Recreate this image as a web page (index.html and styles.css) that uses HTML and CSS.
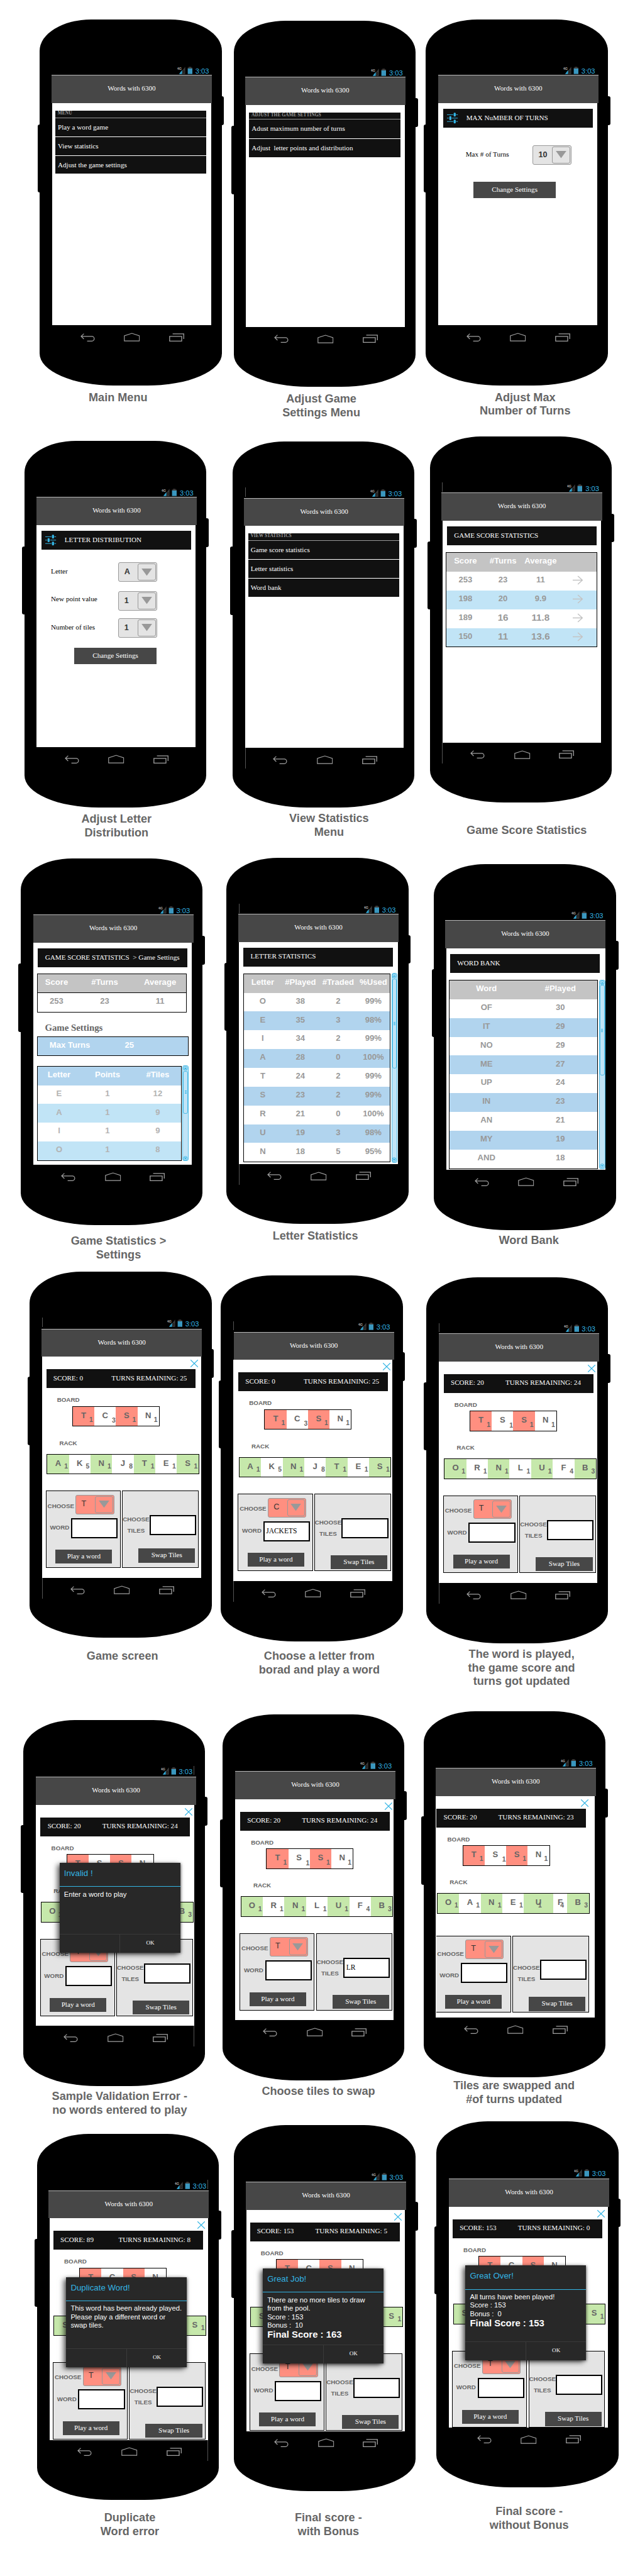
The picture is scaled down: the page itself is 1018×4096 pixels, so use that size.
FILE: index.html
```html
<!DOCTYPE html>
<html lang="en">
<head>
<meta charset="utf-8">
<title>Words with 6300 - screens</title>
<link rel="stylesheet" href="styles.css">
</head>
<body>
<svg class="sprite" width="0" height="0" aria-hidden="true">
  <symbol id="signal" viewBox="0 0 24 12">
    <text x="-0.3" y="5" class="net">4G</text>
    <path d="M2.8 11.7L7.6 5.6V11.7Z" fill="#33a9d6"/>
    <path d="M8.2 6L12.6 .2V11.7H8.2Z" fill="#3a3a3a"/>
    <path d="M9 7.4l1.4-1.8 1.4 1.8zM9 8.6l1.4 1.8 1.4-1.8z" fill="#111"/>
    <path d="M18.2 .3h4v1.2h1.8v2h-7.4v-2h1.6z" fill="#3d3d3d"/>
    <path d="M16.6 3h7.4v8.7h-7.4z" fill="#3a97bf"/>
  </symbol>
  <symbol id="back" viewBox="0 0 23 13"><path d="M5.4 .6L1 4.8L5.4 9M1 4.8H18.2a3.7 3.75 0 0 1 0 7.5H10.6" fill="none" stroke="#a0a0a0" stroke-width="1.2"/></symbol>
  <symbol id="home" viewBox="0 0 26 14"><path d="M.8 13.3V4.8L13 .9L25.2 4.8V13.3Z" fill="none" stroke="#a0a0a0" stroke-width="1.2"/></symbol>
  <symbol id="recent" viewBox="0 0 24 13"><path d="M.8 4.8H20V12.3H.8ZM5.6 .8H23.3V9" fill="none" stroke="#a0a0a0" stroke-width="1.3"/></symbol>
  <symbol id="sliders" viewBox="0 0 18 18">
    <path d="M0 3.4H18M0 9H18M0 14.6H18" stroke="#33b5e5" stroke-width="1"/>
    <path d="M10.2 3.4H15M2.8 9H8M10.2 14.6H15" stroke="#111" stroke-width="2"/>
    <rect x="11" y="0" width="3.4" height="6.4" rx="1.4" fill="#33b5e5"/>
    <rect x="3.8" y="5.8" width="3.4" height="6.4" rx="1.4" fill="#33b5e5"/>
    <rect x="11" y="11.4" width="3.4" height="6.4" rx="1.4" fill="#33b5e5"/>
  </symbol>
  <symbol id="down" viewBox="0 0 17 12"><path d="M0 0H17L8.5 11.6Z" fill="#999"/></symbol>
  <symbol id="go" viewBox="0 0 17 15"><path d="M0 7.5H15.6M8.4 .8L15.8 7.5L8.4 14.2" fill="none" stroke="#c4c4c4" stroke-width="1.5"/></symbol>
  <symbol id="close" viewBox="0 0 12 12"><path d="M.2 .3L11.8 11.7M11.8 .3L.2 11.7" stroke="#33b5e5" stroke-width="1.2"/></symbol>
  <symbol id="scrollup" viewBox="0 0 8 8"><circle cx="4" cy="4" r="3.3" fill="none" stroke="#33b5e5" stroke-width=".9"/><path d="M4 2L6.4 5.4H1.6Z" fill="#33b5e5"/></symbol>
  <symbol id="scrolldown" viewBox="0 0 8 8"><circle cx="4" cy="4" r="3.3" fill="none" stroke="#33b5e5" stroke-width=".9"/><path d="M4 6L6.4 2.6H1.6Z" fill="#33b5e5"/></symbol>
</svg>

<section class="row row1">
  <figure class="phone p1"><div class="body">
    <div class="status"><svg><use href="#signal"/></svg><span>3:03</span></div>
    <header>Words with 6300</header>
    <main class="screen">
      <div class="menu"><h2>MENU</h2><p>Play a word game</p><p>View statistics</p><p>Adjust the game settings</p></div>
    </main>
    <nav><svg class="back"><use href="#back"/></svg><svg class="home"><use href="#home"/></svg><svg class="recent"><use href="#recent"/></svg></nav>
  </div><figcaption>Main Menu</figcaption></figure>

  <figure class="phone p2"><div class="body">
    <div class="status"><svg><use href="#signal"/></svg><span>3:03</span></div>
    <header>Words with 6300</header>
    <main class="screen">
      <div class="menu"><h2>ADJUST THE GAME SETTINGS</h2><p>Adust maximum number of turns</p><p>Adjust  letter points and distribution</p></div>
    </main>
    <nav><svg class="back"><use href="#back"/></svg><svg class="home"><use href="#home"/></svg><svg class="recent"><use href="#recent"/></svg></nav>
  </div><figcaption>Adjust Game<br>Settings Menu</figcaption></figure>

  <figure class="phone p3"><div class="body">
    <div class="status"><svg><use href="#signal"/></svg><span>3:03</span></div>
    <header>Words with 6300</header>
    <main class="screen">
      <div class="bar"><svg class="sliders"><use href="#sliders"/></svg>MAX NuMBER OF TURNS</div>
      <div class="form turns">
        <div class="field"><label>Max # of Turns</label><div class="combo"><b>10</b><i><svg><use href="#down"/></svg></i></div></div>
        <div class="btn">Change Settings</div>
      </div>
    </main>
    <nav><svg class="back"><use href="#back"/></svg><svg class="home"><use href="#home"/></svg><svg class="recent"><use href="#recent"/></svg></nav>
  </div><figcaption>Adjust Max<br>Number of Turns</figcaption></figure>
</section>

<section class="row row2">
  <figure class="phone p4"><div class="body">
    <div class="status"><svg><use href="#signal"/></svg><span>3:03</span></div>
    <header>Words with 6300</header>
    <main class="screen">
      <div class="bar"><svg class="sliders"><use href="#sliders"/></svg>LETTER DISTRIBUTION</div>
      <div class="form letters">
        <div class="field"><label>Letter</label><div class="combo"><b>A</b><i><svg><use href="#down"/></svg></i></div></div>
        <div class="field raised"><label>New point value</label><div class="combo"><b>1</b><i><svg><use href="#down"/></svg></i></div></div>
        <div class="field"><label>Number of tiles</label><div class="combo"><b>1</b><i><svg><use href="#down"/></svg></i></div></div>
        <div class="btn">Change Settings</div>
      </div>
    </main>
    <nav><svg class="back"><use href="#back"/></svg><svg class="home"><use href="#home"/></svg><svg class="recent"><use href="#recent"/></svg></nav>
  </div><figcaption>Adjust Letter<br>Distribution</figcaption></figure>

  <figure class="phone p5"><div class="body edge-left">
    <div class="status"><svg><use href="#signal"/></svg><span>3:03</span></div>
    <header>Words with 6300</header>
    <main class="screen">
      <div class="menu"><h2>VIEW STATISTICS</h2><p>Game score statistics</p><p>Letter statistics</p><p>Word bank</p></div>
    </main>
    <nav><svg class="back"><use href="#back"/></svg><svg class="home"><use href="#home"/></svg><svg class="recent"><use href="#recent"/></svg></nav>
  </div><figcaption>View Statistics<br>Menu</figcaption></figure>

  <figure class="phone p6"><div class="body edge-left">
    <div class="status"><svg><use href="#signal"/></svg><span>3:03</span></div>
    <header>Words with 6300</header>
    <main class="screen">
      <div class="bar">GAME SCORE STATISTICS</div>
      <table class="scores">
        <tr><th>Score</th><th>#Turns</th><th>Average</th><th></th></tr>
        <tr><td>253</td><td>23</td><td>11</td><td><svg><use href="#go"/></svg></td></tr>
        <tr class="sky"><td>198</td><td>20</td><td>9.9</td><td><svg><use href="#go"/></svg></td></tr>
        <tr><td>189</td><td class="big">16</td><td class="big">11.8</td><td><svg><use href="#go"/></svg></td></tr>
        <tr class="sky"><td>150</td><td class="big">11</td><td class="big">13.6</td><td><svg><use href="#go"/></svg></td></tr>
      </table>
    </main>
    <nav><svg class="back"><use href="#back"/></svg><svg class="home"><use href="#home"/></svg><svg class="recent"><use href="#recent"/></svg></nav>
  </div><figcaption>Game Score Statistics</figcaption></figure>
</section>

<section class="row row3">
  <figure class="phone p7"><div class="body">
    <div class="status"><svg><use href="#signal"/></svg><span>3:03</span></div>
    <header>Words with 6300</header>
    <main class="screen">
      <div class="bar">GAME SCORE STATISTICS  &gt; Game Settings</div>
      <table class="summary">
        <colgroup><col class="w60"><col class="w93"><col></colgroup>
        <tr><th>Score</th><th>#Turns</th><th>Average</th></tr>
        <tr><td>253</td><td>23</td><td>11</td></tr>
      </table>
      <h3>Game Settings</h3>
      <div class="maxturns"><span>Max Turns</span><span>25</span></div>
      <div class="scrolled">
        <table class="tiles">
          <colgroup><col class="w68"><col class="w86"><col></colgroup>
          <tr><th>Letter</th><th>Points</th><th>#Tiles</th></tr>
          <tr><td>E</td><td>1</td><td>12</td></tr>
          <tr class="sky"><td>A</td><td>1</td><td>9</td></tr>
          <tr><td>I</td><td>1</td><td>9</td></tr>
          <tr class="sky"><td>O</td><td>1</td><td>8</td></tr>
        </table>
        <div class="scroll"><svg><use href="#scrollup"/></svg><div class="thumb short"><span></span></div><svg><use href="#scrolldown"/></svg></div>
      </div>
    </main>
    <nav><svg class="back"><use href="#back"/></svg><svg class="home"><use href="#home"/></svg><svg class="recent"><use href="#recent"/></svg></nav>
  </div><figcaption>Game Statistics &gt;<br>Settings</figcaption></figure>

  <figure class="phone p8"><div class="body edge-left">
    <div class="status"><svg><use href="#signal"/></svg><span>3:03</span></div>
    <header>Words with 6300</header>
    <main class="screen">
      <div class="bar">LETTER STATISTICS</div>
      <div class="scrolled">
        <table class="usage">
          <colgroup><col class="w60"><col class="w60"><col class="w60"><col></colgroup>
          <tr><th>Letter</th><th>#Played</th><th>#Traded</th><th>%Used</th></tr>
          <tr><td>O</td><td>38</td><td>2</td><td>99%</td></tr>
          <tr class="blue"><td>E</td><td>35</td><td>3</td><td>98%</td></tr>
          <tr><td>I</td><td>34</td><td>2</td><td>99%</td></tr>
          <tr class="blue"><td>A</td><td>28</td><td>0</td><td>100%</td></tr>
          <tr><td>T</td><td>24</td><td>2</td><td>99%</td></tr>
          <tr class="blue"><td>S</td><td>23</td><td>2</td><td>99%</td></tr>
          <tr><td>R</td><td>21</td><td>0</td><td>100%</td></tr>
          <tr class="blue"><td>U</td><td>19</td><td>3</td><td>98%</td></tr>
          <tr><td>N</td><td>18</td><td>5</td><td>95%</td></tr>
        </table>
        <div class="scroll"><svg><use href="#scrollup"/></svg><div class="thumb"><span></span></div><svg><use href="#scrolldown"/></svg></div>
      </div>
    </main>
    <nav><svg class="back"><use href="#back"/></svg><svg class="home"><use href="#home"/></svg><svg class="recent"><use href="#recent"/></svg></nav>
  </div><figcaption>Letter Statistics</figcaption></figure>

  <figure class="phone p9"><div class="body">
    <div class="status"><svg><use href="#signal"/></svg><span>3:03</span></div>
    <header>Words with 6300</header>
    <main class="screen">
      <div class="bar">WORD BANK</div>
      <div class="scrolled">
        <table class="bank">
          <tr><th>Word</th><th>#Played</th></tr>
          <tr><td>OF</td><td>30</td></tr>
          <tr class="blue"><td>IT</td><td>29</td></tr>
          <tr><td>NO</td><td>29</td></tr>
          <tr class="blue"><td>ME</td><td>27</td></tr>
          <tr><td>UP</td><td>24</td></tr>
          <tr class="blue"><td>IN</td><td>23</td></tr>
          <tr><td>AN</td><td>21</td></tr>
          <tr class="blue"><td>MY</td><td>19</td></tr>
          <tr><td>AND</td><td>18</td></tr>
        </table>
        <div class="scroll"><svg><use href="#scrollup"/></svg><div class="thumb"><span></span></div><svg><use href="#scrolldown"/></svg></div>
      </div>
    </main>
    <nav><svg class="back"><use href="#back"/></svg><svg class="home"><use href="#home"/></svg><svg class="recent"><use href="#recent"/></svg></nav>
  </div><figcaption>Word Bank</figcaption></figure>
</section>

<section class="row row4">
  <figure class="phone p10"><div class="body edge-left">
    <div class="status"><svg><use href="#signal"/></svg><span>3:03</span></div>
    <header>Words with 6300</header>
    <main class="screen"><div class="game">
      <svg class="close"><use href="#close"/></svg>
      <div class="bar"><span>SCORE: 0</span><span class="left">TURNS REMAINING: 25</span></div>
      <h4>BOARD</h4>
      <div class="board"><div>T<sub>1</sub></div><div>C<sub>3</sub></div><div>S<sub>1</sub></div><div>N<sub>1</sub></div></div>
      <h4 class="rk">RACK</h4>
      <div class="rack"><div>A<sub>1</sub></div><div>K<sub>5</sub></div><div>N<sub>1</sub></div><div>J<sub>8</sub></div><div>T<sub>1</sub></div><div>E<sub>1</sub></div><div>S<sub>1</sub></div></div>
      <div class="panels">
        <div class="play"><div class="line"><label>CHOOSE</label><div class="combo red"><span>T</span><i><svg><use href="#down"/></svg></i></div></div>
          <div class="line"><label>WORD</label><div class="input"></div></div><div class="btn">Play a word</div></div>
        <div class="swap"><div class="line"><label>CHOOSE<br>TILES</label><div class="input"></div></div><div class="btn">Swap Tiles</div></div>
      </div>
    </div></main>
    <nav><svg class="back"><use href="#back"/></svg><svg class="home"><use href="#home"/></svg><svg class="recent"><use href="#recent"/></svg></nav>
  </div><figcaption>Game screen</figcaption></figure>

  <figure class="phone p11"><div class="body edge-left">
    <div class="status"><svg><use href="#signal"/></svg><span>3:03</span></div>
    <header>Words with 6300</header>
    <main class="screen"><div class="game">
      <svg class="close"><use href="#close"/></svg>
      <div class="bar"><span>SCORE: 0</span><span class="left">TURNS REMAINING: 25</span></div>
      <h4>BOARD</h4>
      <div class="board"><div>T<sub>1</sub></div><div>C<sub>3</sub></div><div>S<sub>1</sub></div><div>N<sub>1</sub></div></div>
      <h4 class="rk">RACK</h4>
      <div class="rack"><div>A<sub>1</sub></div><div>K<sub>5</sub></div><div>N<sub>1</sub></div><div>J<sub>8</sub></div><div>T<sub>1</sub></div><div>E<sub>1</sub></div><div>S<sub>1</sub></div></div>
      <div class="panels">
        <div class="play"><div class="line"><label>CHOOSE</label><div class="combo red"><span>C</span><i><svg><use href="#down"/></svg></i></div></div>
          <div class="line"><label>WORD</label><div class="input">JACKETS</div></div><div class="btn">Play a word</div></div>
        <div class="swap"><div class="line"><label>CHOOSE<br>TILES</label><div class="input"></div></div><div class="btn">Swap Tiles</div></div>
      </div>
    </div></main>
    <nav><svg class="back"><use href="#back"/></svg><svg class="home"><use href="#home"/></svg><svg class="recent"><use href="#recent"/></svg></nav>
  </div><figcaption>Choose a letter from<br>borad and play a word</figcaption></figure>

  <figure class="phone p12"><div class="body edge-left">
    <div class="status"><svg><use href="#signal"/></svg><span>3:03</span></div>
    <header>Words with 6300</header>
    <main class="screen"><div class="game">
      <svg class="close"><use href="#close"/></svg>
      <div class="bar"><span>SCORE: 20</span><span class="left">TURNS REMAINING: 24</span></div>
      <h4>BOARD</h4>
      <div class="board"><div>T<sub>1</sub></div><div>S<sub>1</sub></div><div>S<sub>1</sub></div><div>N<sub>1</sub></div></div>
      <h4 class="rk">RACK</h4>
      <div class="rack"><div>O<sub>1</sub></div><div>R<sub>1</sub></div><div>N<sub>1</sub></div><div>L<sub>1</sub></div><div>U<sub>1</sub></div><div>F<sub>4</sub></div><div>B<sub>3</sub></div></div>
      <div class="panels">
        <div class="play"><div class="line"><label>CHOOSE</label><div class="combo red"><span>T</span><i><svg><use href="#down"/></svg></i></div></div>
          <div class="line"><label>WORD</label><div class="input"></div></div><div class="btn">Play a word</div></div>
        <div class="swap"><div class="line"><label>CHOOSE<br>TILES</label><div class="input"></div></div><div class="btn">Swap Tiles</div></div>
      </div>
    </div></main>
    <nav><svg class="back"><use href="#back"/></svg><svg class="home"><use href="#home"/></svg><svg class="recent"><use href="#recent"/></svg></nav>
  </div><figcaption>The word is played,<br>the game score and<br>turns got updated</figcaption></figure>
</section>

<section class="row row5">
  <figure class="phone p13"><div class="body edge-right">
    <div class="status"><svg><use href="#signal"/></svg><span>3:03</span></div>
    <header>Words with 6300</header>
    <main class="screen"><div class="game">
      <svg class="close"><use href="#close"/></svg>
      <div class="bar"><span>SCORE: 20</span><span class="left">TURNS REMAINING: 24</span></div>
      <h4>BOARD</h4>
      <div class="board"><div>T</div><div>S</div><div>S</div><div>N</div></div>
      <h4 class="rk">RACK</h4>
      <div class="rack"><div>O<sub>1</sub></div><div></div><div></div><div></div><div></div><div></div><div>B<sub>3</sub></div></div>
      <div class="panels">
        <div class="play"><div class="line"><label>CHOOSE</label><div class="combo red"><span>T</span><i><svg><use href="#down"/></svg></i></div></div>
          <div class="line"><label>WORD</label><div class="input"></div></div><div class="btn">Play a word</div></div>
        <div class="swap"><div class="line"><label>CHOOSE<br>TILES</label><div class="input"></div></div><div class="btn">Swap Tiles</div></div>
      </div>
      <div class="dialog"><h5>Invalid !</h5><div class="msg">Enter a word to play</div><footer><span></span><span>OK</span></footer></div>
    </div></main>
    <nav><svg class="back"><use href="#back"/></svg><svg class="home"><use href="#home"/></svg><svg class="recent"><use href="#recent"/></svg></nav>
  </div><figcaption>Sample Validation Error -<br>no words entered to play</figcaption></figure>

  <figure class="phone p14"><div class="body">
    <div class="status"><svg><use href="#signal"/></svg><span>3:03</span></div>
    <header>Words with 6300</header>
    <main class="screen"><div class="game">
      <svg class="close"><use href="#close"/></svg>
      <div class="bar"><span>SCORE: 20</span><span class="left">TURNS REMAINING: 24</span></div>
      <h4>BOARD</h4>
      <div class="board"><div>T<sub>1</sub></div><div>S<sub>1</sub></div><div>S<sub>1</sub></div><div>N<sub>1</sub></div></div>
      <h4 class="rk">RACK</h4>
      <div class="rack"><div>O<sub>1</sub></div><div>R<sub>1</sub></div><div>N<sub>1</sub></div><div>L<sub>1</sub></div><div>U<sub>1</sub></div><div>F<sub>4</sub></div><div>B<sub>3</sub></div></div>
      <div class="panels">
        <div class="play"><div class="line"><label>CHOOSE</label><div class="combo red"><span>T</span><i><svg><use href="#down"/></svg></i></div></div>
          <div class="line"><label>WORD</label><div class="input"></div></div><div class="btn">Play a word</div></div>
        <div class="swap"><div class="line"><label>CHOOSE<br>TILES</label><div class="input">LR</div></div><div class="btn">Swap Tiles</div></div>
      </div>
    </div></main>
    <nav><svg class="back"><use href="#back"/></svg><svg class="home"><use href="#home"/></svg><svg class="recent"><use href="#recent"/></svg></nav>
  </div><figcaption>Choose tiles to swap</figcaption></figure>

  <figure class="phone p15"><div class="body">
    <div class="status"><svg><use href="#signal"/></svg><span>3:03</span></div>
    <header>Words with 6300</header>
    <main class="screen"><div class="game">
      <svg class="close"><use href="#close"/></svg>
      <div class="bar"><span>SCORE: 20</span><span class="left">TURNS REMAINING: 23</span></div>
      <h4>BOARD</h4>
      <div class="board"><div>T<sub>1</sub></div><div>S<sub>1</sub></div><div>S<sub>1</sub></div><div>N<sub>1</sub></div></div>
      <h4 class="rk">RACK</h4>
      <div class="rack"><div>O<sub>1</sub></div><div>A<sub>1</sub></div><div>N<sub>1</sub></div><div>E<sub>1</sub></div><div class="wide">U<sub>1</sub></div><div class="narrow">F<sub>4</sub></div><div>B<sub>3</sub></div></div>
      <div class="panels">
        <div class="play"><div class="line"><label>CHOOSE</label><div class="combo red"><span>T</span><i><svg><use href="#down"/></svg></i></div></div>
          <div class="line"><label>WORD</label><div class="input"></div></div><div class="btn">Play a word</div></div>
        <div class="swap"><div class="line"><label>CHOOSE<br>TILES</label><div class="input"></div></div><div class="btn">Swap Tiles</div></div>
      </div>
    </div></main>
    <nav><svg class="back"><use href="#back"/></svg><svg class="home"><use href="#home"/></svg><svg class="recent"><use href="#recent"/></svg></nav>
  </div><figcaption>Tiles are swapped and<br>#of turns updated</figcaption></figure>
</section>

<section class="row row6">
  <figure class="phone p16"><div class="body edge-right">
    <div class="status"><svg><use href="#signal"/></svg><span>3:03</span></div>
    <header>Words with 6300</header>
    <main class="screen"><div class="game">
      <svg class="close"><use href="#close"/></svg>
      <div class="bar"><span>SCORE: 89</span><span class="left">TURNS REMAINING: 8</span></div>
      <h4>BOARD</h4>
      <div class="board"><div>T</div><div>C</div><div>S</div><div>N</div></div>
      <h4 class="rk hid"></h4>
      <div class="rack"><div>S</div><div></div><div></div><div></div><div></div><div></div><div>S<sub>1</sub></div></div>
      <div class="panels">
        <div class="play"><div class="line"><label>CHOOSE</label><div class="combo red"><span>T</span><i><svg><use href="#down"/></svg></i></div></div>
          <div class="line"><label>WORD</label><div class="input"></div></div><div class="btn">Play a word</div></div>
        <div class="swap"><div class="line"><label>CHOOSE<br>TILES</label><div class="input"></div></div><div class="btn">Swap Tiles</div></div>
      </div>
      <div class="dialog"><h5>Duplicate Word!</h5><div class="msg">This word has been already played.<br>Please play a different word or<br>swap tiles.</div><footer><span></span><span>OK</span></footer></div>
    </div></main>
    <nav><svg class="back"><use href="#back"/></svg><svg class="home"><use href="#home"/></svg><svg class="recent"><use href="#recent"/></svg></nav>
  </div><figcaption>Duplicate<br>Word error</figcaption></figure>

  <figure class="phone p17"><div class="body">
    <div class="status"><svg><use href="#signal"/></svg><span>3:03</span></div>
    <header>Words with 6300</header>
    <main class="screen"><div class="game">
      <svg class="close"><use href="#close"/></svg>
      <div class="bar"><span>SCORE: 153</span><span class="left">TURNS REMAINING: 5</span></div>
      <h4>BOARD</h4>
      <div class="board"><div>T</div><div>C</div><div>S</div><div>N</div></div>
      <h4 class="rk hid"></h4>
      <div class="rack"><div>S</div><div></div><div></div><div></div><div></div><div></div><div>S<sub>1</sub></div></div>
      <div class="panels">
        <div class="play"><div class="line"><label>CHOOSE</label><div class="combo red"><span>T</span><i><svg><use href="#down"/></svg></i></div></div>
          <div class="line"><label>WORD</label><div class="input"></div></div><div class="btn">Play a word</div></div>
        <div class="swap"><div class="line"><label>CHOOSE<br>TILES</label><div class="input"></div></div><div class="btn">Swap Tiles</div></div>
      </div>
      <div class="dialog tall"><h5>Great Job!</h5><div class="msg">There are no more tiles to draw<br>from the pool.<br>Score : 153<br>Bonus :  10<strong>Final Score : 163</strong></div><footer><span></span><span>OK</span></footer></div>
    </div></main>
    <nav><svg class="back"><use href="#back"/></svg><svg class="home"><use href="#home"/></svg><svg class="recent"><use href="#recent"/></svg></nav>
  </div><figcaption>Final score -<br>with Bonus</figcaption></figure>

  <figure class="phone p18"><div class="body">
    <div class="status"><svg><use href="#signal"/></svg><span>3:03</span></div>
    <header>Words with 6300</header>
    <main class="screen"><div class="game">
      <svg class="close"><use href="#close"/></svg>
      <div class="bar"><span>SCORE: 153</span><span class="left">TURNS REMAINING: 0</span></div>
      <h4>BOARD</h4>
      <div class="board"><div>T</div><div>C</div><div>S</div><div>N</div></div>
      <h4 class="rk hid"></h4>
      <div class="rack"><div>S</div><div></div><div></div><div></div><div></div><div></div><div>S<sub>1</sub></div></div>
      <div class="panels">
        <div class="play"><div class="line"><label>CHOOSE</label><div class="combo red"><span>T</span><i><svg><use href="#down"/></svg></i></div></div>
          <div class="line"><label>WORD</label><div class="input"></div></div><div class="btn">Play a word</div></div>
        <div class="swap"><div class="line"><label>CHOOSE<br>TILES</label><div class="input"></div></div><div class="btn">Swap Tiles</div></div>
      </div>
      <div class="dialog tall"><h5>Great Over!</h5><div class="msg">All turns have been played!<br>Score : 153<br>Bonus :  0<strong>Final Score : 153</strong></div><footer><span></span><span>OK</span></footer></div>
    </div></main>
    <nav><svg class="back"><use href="#back"/></svg><svg class="home"><use href="#home"/></svg><svg class="recent"><use href="#recent"/></svg></nav>
  </div><figcaption>Final score -<br>without Bonus</figcaption></figure>
</section>
</body>
</html>
```

FILE: styles.css
```css
* { box-sizing: border-box; margin: 0; padding: 0; }
body { width: 1018px; background: #fff; font-family: "Liberation Serif", serif; font-size: 11.15px; overflow-x: hidden; }
svg { display: block; flex: none; overflow: visible; }
.sprite { position: absolute; }
.net { font: bold 5.4px "Liberation Sans", sans-serif; fill: #b5b5b5; }

/* rows of phones */
.row { display: flex; align-items: flex-start; }
.row1 { height: 680px; }
.row2 { height: 670px; }
.row3 { height: 660px; }
.row4 { height: 700px; }
.row5 { height: 660px; }
.row6 { height: 726px; }
.phone { flex: none; width: 289.4px; margin-left: var(--x); padding-top: var(--y); }

/* --x/--y gap to neighbours, --hx/--hy title bar inset, --cx/--cy caption shift, --gx game inset */
.p1  { --x: 63.4px; --y: 30.6px; --hx: 18.4px; --hy: 89px;   --cx: -20.3px; --cy: 9.2px; }
.p2  { --x: 18.9px; --y: 33.1px; --hx: 18px;   --hy: 89.3px; --cx: -5.3px;  --cy: 8.8px; }
.p3  { --x: 16.4px; --y: 30.6px; --hx: 19.3px; --hy: 89px;   --cx: 13.1px;  --cy: 8.8px; }
.p4  { --x: 38.6px; --y: 21.4px; --hx: 19.3px; --hy: 89.1px; --cx: 2px;     --cy: 8.8px; }
.p5  { --x: 42.1px; --y: 22.2px; --hx: 18px;   --hy: 89.6px; --cx: 8.6px;   --cy: 6.7px; }
.p6  { --x: 24.4px; --y: 14px;   --hx: 18.6px; --hy: 89.6px; --cx: 9.2px;   --cy: 33.8px; }
.p7  { --x: 33px;   --y: 15.3px; --hx: 19.6px; --hy: 89.2px; --cx: 10.8px;  --cy: 15.7px; }
.p8  { --x: 38px;   --y: 14px;   --hx: 18.6px; --hy: 89.2px; --cx: -3.5px;  --cy: 8.9px; }
.p9  { --x: 40.7px; --y: 23.5px; --hx: 17.3px; --hy: 90px;   --cx: 6px;     --cy: 6.2px; }
.p10 { --x: 47.4px; --y: 12.2px; --hx: 18.7px; --hy: 90.7px; --cx: 2.6px;   --cy: 18.4px; --gx: 6.4px; }
.p11 { --x: 14.6px; --y: 17.5px; --hx: 20.2px; --hy: 90.3px; --cx: 11.8px;  --cy: 13.1px; --gx: 8px; }
.p12 { --x: 37.2px; --y: 20.5px; --hx: 20.2px; --hy: 89.9px; --cx: 7px;     --cy: 7px;    --gx: 8px; }
.p13 { --x: 37.1px; --y: 24.5px; --hx: 19.9px; --hy: 90.9px; --cx: 8.5px;   --cy: 6.3px;  --gx: 7.6px; }
.p14 { --x: 27.5px; --y: 15.5px; --hx: 19.9px; --hy: 90.9px; --cx: 7.8px;   --cy: 7.5px;  --gx: 8.3px; }
.p15 { --x: 30.2px; --y: 11.2px; --hx: 19.2px; --hy: 90px;   --cx: -.6px;   --cy: 2.3px;  --gx: 1px; }
.p16 { --x: 59.1px; --y: 22.8px; --hx: 18.1px; --hy: 90px;   --cx: 2.7px;   --cy: 18.4px; --gx: 6px; }
.p17 { --x: 23.5px; --y: 8.9px;  --hx: 19px;   --hy: 90.2px; --cx: 5.7px;   --cy: 32.3px; --gx: 5.9px; }
.p18 { --x: 33px;   --y: 3px;    --hx: 19.6px; --hy: 91.4px; --cx: 2.6px;   --cy: 27.8px; --gx: 5.8px; }

figcaption { width: 289.4px; margin: var(--cy) 0 0 var(--cx); font: bold 18.13px/21.8px "Liberation Sans", sans-serif; color: #666; text-align: center; white-space: nowrap; }

/* phone body */
.body { position: relative; width: 289.4px; height: 582.3px; background: #000; border-radius: 82px 82px 118px 118px / 50px 50px 51px 51px; display: flex; flex-direction: column; }
.body::before, .body::after { content: ""; position: absolute; background: #000; width: 5px; }
.body::before { left: -3.7px; top: 167.2px; height: 108.3px; border-radius: 3px 0 0 3px; }
.body::after { right: -3.7px; top: 122.6px; height: 45.9px; border-radius: 0 3px 3px 0; }
.status { flex: none; height: 87.8px; display: flex; justify-content: flex-end; align-items: flex-end; padding-right: 20.3px; font: 11.15px/12px "Liberation Sans", sans-serif; color: #33b5e5; }
.status svg { width: 24px; height: 12px; margin-right: 4.8px; }
.status span { margin-bottom: -1px; }
header { flex: none; width: 255.2px; height: 44.8px; margin: calc(var(--hy) - 88px) 0 0 var(--hx); background: #474747; border-top: 1px solid #b8b8b8; color: #fff; text-align: center; line-height: 40.5px; position: relative; }
.screen { flex: 1; width: 252.4px; margin-left: 19.8px; background: #fff; min-height: 0; }
nav { flex: none; height: 95.5px; display: flex; align-items: flex-start; padding: 11.8px 0 0 64.4px; }
nav .back { width: 23px; height: 13px; margin: .8px 46.4px 0 0; }
nav .home { width: 25.5px; height: 14px; margin-right: 46.2px; }
nav .recent { width: 24px; height: 13px; margin-top: .8px; }
.edge-left .status, .edge-right .status, .edge-left nav, .edge-right nav { background: linear-gradient(#555, #555) no-repeat 19.6px 73px / 1px 40px; }
.edge-left nav { background-position: 19.6px 0; background-size: 1px 33px; }
.edge-right .status { background-position: 271.4px 73px; }
.edge-right nav { background-position: 271.4px 0; background-size: 1px 33px; }

/* menu list */
.menu { width: 240.4px; margin: 12px 0 0 4.8px; background: #111; color: #fff; }
.menu h2 { height: 11.4px; border-bottom: 1.7px solid #999; padding-left: 3.8px; font: bold 7.46px/7px "Liberation Serif", serif; color: #999; white-space: nowrap; }
.menu p { height: 29.6px; padding-left: 4px; line-height: 28px; white-space: pre; }
.menu p + p { border-top: 1px solid #fff; }

/* black title bar */
.bar { display: flex; align-items: center; width: 237.9px; height: 30px; margin: 9px 0 0 7.7px; padding: 0 0 3px 11.2px; background: #111; color: #fff; white-space: pre; }
.sliders { width: 17.4px; height: 17.7px; margin: 3px 13.5px 0 -5.4px; }
.p8 .bar { margin-left: 7px; }
.p9 .bar { margin-left: 5.8px; }
.p6 .bar { margin-left: 7.4px; }

/* forms */
.combo { flex: none; display: flex; width: 61.2px; height: 31px; border: 1.3px solid #999; border-radius: 3px; background: #e4e4e4; padding: 1px; color: #333; }
.combo b, .combo span { flex: 1; padding-left: 7.2px; font: bold 12.6px/26px "Liberation Sans", sans-serif; }
.combo span { font-weight: normal; line-height: 25px; }
.combo i { width: 28.4px; border: 1px solid #999; border-radius: 3px; display: flex; align-items: center; justify-content: center; }
.combo svg { width: 17px; height: 11.8px; }
.red { background: #ff8f80; }
.btn { background: #474747; color: #fff; text-align: center; }
.field { display: flex; align-items: flex-start; line-height: 26px; }
.turns { padding: 27.7px 0 0 43.4px; }
.turns label { width: 106.7px; line-height: 28.5px; }
.turns .btn { width: 131.4px; height: 26.6px; line-height: 24px; margin: 27px 0 0 12.3px; }
.letters { padding: 20px 0 0 22.7px; }
.letters label { width: 107.4px; line-height: 28.5px; }
.letters .field + .field { margin-top: 14.6px; }
.letters .raised + .field { margin-top: 12.1px; }
.letters .raised label { line-height: 24px; }
.letters .btn { width: 131.2px; height: 25.8px; line-height: 24px; margin: 16.2px 0 0 36.9px; }

/* tables */
table { border-collapse: separate; border-spacing: 0; table-layout: fixed; border: 1px solid #000; font: bold 13.1px/15px "Liberation Sans", sans-serif; color: #999; text-align: center; margin-top: 11px; }
th, td { height: 29.85px; padding: 0 0 4.6px; }
th { background: #c4c4c4; color: #fff; }
.sky td { background: #c1e4f6; }
.blue td { background: #b1d4ee; }
td.big { font-size: 15.2px; }
td svg { width: 16.5px; height: 15px; margin: 2px auto 0; }
.w60 { width: 60px; }
.w68 { width: 68px; }
.w86 { width: 86px; }
.w93 { width: 93px; }
.scores { width: 241px; margin-left: 5.8px; }
.summary { width: 238.2px; margin: 10px 0 0 6.2px; }
.summary th { border-bottom: 1px solid #000; }
.tiles { width: 229.8px; margin-left: 6.2px; color: #b3b3b3; }
.tiles th { background: #b1d4ee; }
.usage { width: 234px; margin-left: 6.7px; }
.bank { width: 237.4px; margin-left: 3.7px; }
h3 { font: bold 14.85px/17px "Liberation Serif", serif; color: #666; margin: 16.6px 0 0 18.6px; }
.maxturns { display: flex; width: 241.2px; height: 30.6px; margin: 4.6px 0 -4.8px 6.2px; border: 1px solid #000; background: #b1d4ee; color: #fff; font: bold 13.1px/25.5px "Liberation Sans", sans-serif; }
.maxturns span { width: 146px; padding-left: 18.8px; }
.maxturns span + span { padding-left: 19px; }
.scrolled { display: flex; }
.p7 .scrolled { margin-top: 10px; }
.scroll { display: flex; flex-direction: column; width: 9.8px; margin: 10.6px 0 -.4px 1.7px; border: 1.3px solid #4fbde8; border-radius: 3px; background: #c1e4f6; }
.scroll svg { width: 7.8px; height: 7.6px; margin-left: -.1px; }
.thumb { height: 143.5px; margin-bottom: auto; border: 1px solid #4fbde8; border-radius: 3px; display: flex; align-items: center; justify-content: center; }
.short { height: 68px; }
.thumb span { width: 3.4px; height: 5px; background: repeating-linear-gradient(#33b5e5 0 1px, transparent 1px 2px); }

/* game */
.game { position: relative; width: 243px; margin-left: var(--gx); padding-top: 4.9px; }
.close { width: 12px; height: 12px; margin-left: 229.6px; }
.game .bar { margin: 3px 0 0; }
.game .bar span { width: 92.6px; }
.game .bar .left { width: auto; }
.p12 .bar span, .p13 .bar span, .p14 .bar span, .p15 .bar span { width: 87px; }
.p16 .bar span { width: 92.4px; }
h4 { height: 12px; margin: 13px 0 3.5px 17.1px; font: bold 9.8px/12px "Liberation Sans", sans-serif; color: #666; }
.rk { margin: 20.2px 0 11px 20.8px; }
.board, .rack { display: flex; height: 32.6px; border: 1px solid #000; }
.board { width: 139px; margin-left: 41.2px; }
.rack { width: 242.6px; margin-left: .6px; }
.board div, .rack div { flex: 1; position: relative; text-align: center; font: bold 13.1px/28px "Liberation Sans", sans-serif; color: #666; }
.board div:nth-child(odd) { background: #ff8f80; }
.rack div:nth-child(odd) { background: #c6e8ab; }
sub { position: absolute; left: 26.2px; top: 14.2px; font-size: 10.4px; line-height: 14px; }
.board div:nth-child(2) sub { left: 28px; top: 15.2px; }
.rack sub { left: 27px; top: 12.5px; }
.rack .wide { flex: none; width: 46.4px; }
.rack .narrow { flex: none; width: 22.4px; }
.rack .wide sub { left: 22.6px; }
.rack .narrow sub { left: 11.5px; }
.panels { display: flex; gap: 2.2px; margin: 26px 0 0 -.8px; }
.row6 .panels { margin-top: 41.8px; }
.p15 .panels { margin-top: 35px; }
.play, .swap { height: 122.8px; border: 1px solid #000; background: #e4e4e4; }
.play { width: 119.2px; padding-top: 5.6px; }
.swap { width: 121.8px; padding-top: 37.8px; }
.line { display: flex; align-items: center; }
.line label { width: 46.6px; padding: 4.4px 0 0 1.8px; font: bold 9.8px/12px "Liberation Sans", sans-serif; color: #666; }
.line + .line { margin-top: 5.8px; }
.line + .line label { width: 39.4px; padding: 0 0 1px 5.6px; }
.swap .line { align-items: flex-start; }
.swap .line label { width: 42.8px; padding: 0; margin: -2px 0 -3px -.2px; line-height: 18.1px; text-align: center; white-space: nowrap; }
.p15 .play .line label { padding-top: 14px; }
.p15 .play .line + .line label { padding-top: 9px; }
.p15 .swap .line label { margin: 4px 0 -9px; }
.p15 .play { border-left: 0; }
.input { width: 74.2px; height: 32px; border: 2px solid #000; background: #fff; color: #000; padding-left: 2.4px; line-height: 26px; font-size: 11.5px; }
.play .btn { width: 90px; height: 22.2px; margin: 18.6px 0 0 14.6px; line-height: 21px; }
.swap .btn { width: 90.2px; height: 22.4px; margin: 27px 0 0 25px; line-height: 21px; }
.p10 .swap .btn { margin-top: 21.2px; }

/* dialogs */
.dialog { position: absolute; left: 30.1px; top: 92px; width: 192.2px; height: 142.8px; display: flex; flex-direction: column; background: #282828; color: #fff; box-shadow: -4px 3px 8px rgba(0,0,0,.6), 1px 1px 4px rgba(0,0,0,.5); font: 11.2px/13.4px "Liberation Sans", sans-serif; white-space: pre; }
.row6 .dialog { left: 20.3px; top: 93.4px; }
.dialog.tall { height: 150.8px; }
.dialog h5 { height: 38.3px; border-bottom: 1.7px solid #33b5e5; padding-left: 7.2px; font: 13.3px/34px "Liberation Sans", sans-serif; color: #33b5e5; }
.msg { flex: 1; padding: 5.4px 0 0 7.2px; }
.msg strong { display: block; font-size: 14.9px; line-height: 17px; }
.dialog footer { display: flex; height: 30px; border-top: 1px solid #3a3a3a; font: 9.1px/26.5px "Liberation Serif", serif; text-align: center; }
.dialog footer span { flex: 1; }
.dialog footer span + span { border-left: 1px solid #3a3a3a; }
```
